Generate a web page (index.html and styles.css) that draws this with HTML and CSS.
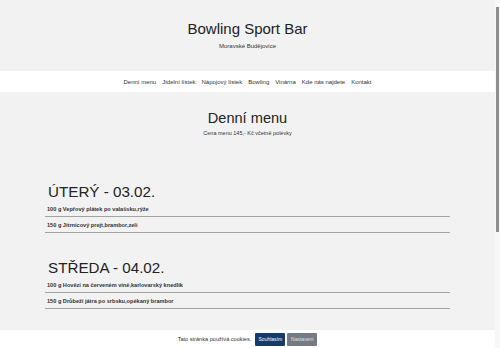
FILE: index.html
```html
<!DOCTYPE html>
<html lang="cs">
<head>
    <meta charset="UTF-8">
    <meta name="viewport" content="width=device-width, initial-scale=1.0">
    <title>Bowling Sport Bar - Denní menu</title>
    <link rel="stylesheet" href="styles.css">
</head>
<body>
    <div class="page">
        <header class="site-header">
            <h1 class="site-title">Bowling Sport Bar</h1>
            <p class="site-town">Moravské Budějovice</p>
        </header>
        <nav class="main-nav">
            <a href="#">Denní menu</a>
            <a href="#">Jídelní lístek</a>
            <a href="#">Nápojový lístek</a>
            <a href="#">Bowling</a>
            <a href="#">Vinárna</a>
            <a href="#">Kde nás najdete</a>
            <a href="#">Kontakt</a>
        </nav>
        <main class="content">
            <div class="intro">
                <h2>Denní menu</h2>
                <p>Cena menu 145,- Kč včetně polévky</p>
            </div>
            <section class="day">
                <h3>ÚTERÝ - 03.02.</h3>
                <div class="dish">100 g Vepřový plátek po valašsku,rýže</div>
                <div class="dish">150 g Jitrnicový prejt,brambor,zelí</div>
            </section>
            <section class="day">
                <h3>STŘEDA - 04.02.</h3>
                <div class="dish">100 g Hovězí na červeném víně,karlovarský knedlík</div>
                <div class="dish">150 g Drůbeží játra po srbsku,opékaný brambor</div>
            </section>
        </main>
    </div>
    <div class="cookie-bar">
        <span>Tato stránka používá cookies.</span>
        <button class="btn btn-primary">Souhlasím</button>
        <button class="btn btn-secondary">Nastavení</button>
    </div>
    <div class="scrollbar"><div class="thumb"></div></div>
</body>
</html>
```

FILE: styles.css
```css
:root {
    --bg-color: #f2f2f2;
    --text-color: #222222;
    --line-color: #a3a3a3;
    --font-family: 'Liberation Sans', Arial, sans-serif;
}
html, body {
    height: 100%;
    overflow: hidden;
}
body {
    margin: 0;
    background-color: var(--bg-color);
    color: var(--text-color);
    font-family: var(--font-family);
}
.page {
    margin-right: 5px;
}
.site-header {
    height: 71px;
    padding-top: 20px;
    box-sizing: border-box;
    text-align: center;
}
.site-title {
    margin: 0;
    font-size: 15px;
    line-height: 17px;
    font-weight: normal;
}
.site-town {
    margin: 5px 0 0;
    font-size: 6px;
    line-height: 8px;
    color: #333333;
}
.main-nav {
    display: flex;
    justify-content: center;
    align-items: center;
    gap: 6px;
    height: 21px;
    background-color: #ffffff;
}
.main-nav a {
    font-size: 6px;
    color: #333333;
    text-decoration: none;
}
.content {
    width: 405px;
    margin: 0 auto;
    padding-bottom: 60px;
}
.intro {
    text-align: center;
    padding-top: 18px;
    padding-bottom: 46px;
}
.intro h2 {
    margin: 0;
    font-size: 14.6px;
    line-height: 17px;
    font-weight: normal;
}
.intro p {
    margin: 3px 0 0;
    font-size: 5.5px;
    line-height: 7px;
    color: #333333;
}
.day + .day {
    margin-top: 26px;
}
.day h3 {
    margin: 0 0 1px 3px;
    font-size: 15.2px;
    line-height: 17px;
    font-weight: normal;
}
.dish {
    padding: 5px 2px 3px;
    font-size: 5.6px;
    line-height: 7px;
    font-weight: bold;
    color: #333333;
    border-bottom: 1px solid var(--line-color);
}
.cookie-bar {
    position: fixed;
    left: 0;
    right: 5px;
    bottom: 0;
    height: 18px;
    display: flex;
    justify-content: center;
    align-items: center;
    gap: 2px;
    background-color: #ffffff;
    font-size: 5.6px;
    color: #333333;
}
.cookie-bar span {
    margin-right: 2px;
}
.btn {
    width: 30px;
    height: 13px;
    padding: 0;
    border: none;
    border-radius: 1px;
    color: #ffffff;
    font-family: var(--font-family);
    font-size: 5px;
}
.btn-primary {
    background-color: #163a6a;
}
.btn-secondary {
    background-color: #757b82;
    color: #e0e0e0;
}
.scrollbar {
    position: fixed;
    top: 0;
    right: 0;
    width: 5px;
    height: 100%;
    background-color: #f7f7f7;
}
.scrollbar .thumb {
    position: absolute;
    top: 7px;
    left: 1px;
    width: 3px;
    height: 225px;
    background-color: #8e8e8e;
}
```
